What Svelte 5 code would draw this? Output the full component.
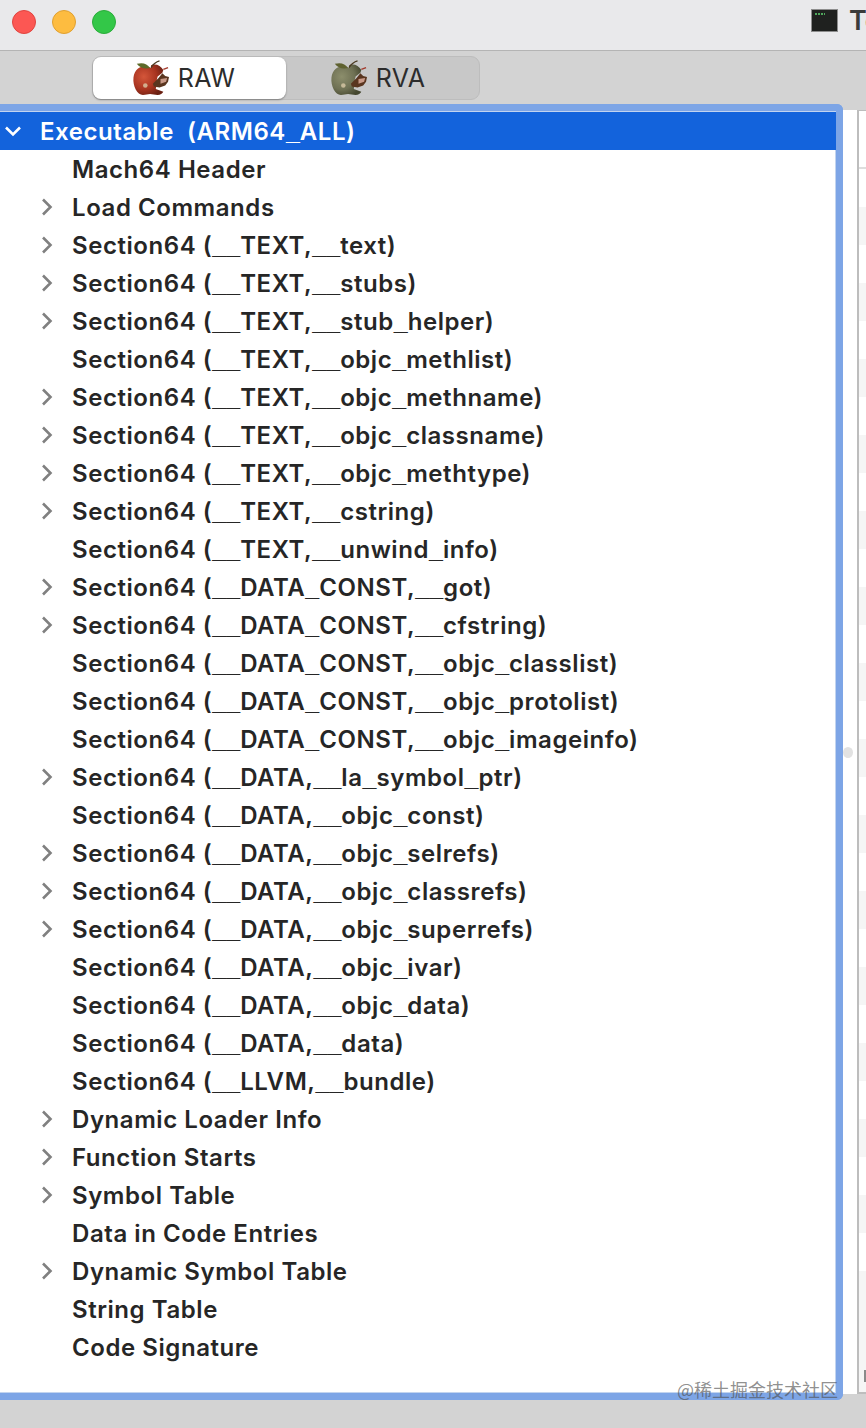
<script>
  const rows = [
    ['Mach64 Header', false],
    ['Load Commands', true],
    ['Section64 (__TEXT,__text)', true],
    ['Section64 (__TEXT,__stubs)', true],
    ['Section64 (__TEXT,__stub_helper)', true],
    ['Section64 (__TEXT,__objc_methlist)', false],
    ['Section64 (__TEXT,__objc_methname)', true],
    ['Section64 (__TEXT,__objc_classname)', true],
    ['Section64 (__TEXT,__objc_methtype)', true],
    ['Section64 (__TEXT,__cstring)', true],
    ['Section64 (__TEXT,__unwind_info)', false],
    ['Section64 (__DATA_CONST,__got)', true],
    ['Section64 (__DATA_CONST,__cfstring)', true],
    ['Section64 (__DATA_CONST,__objc_classlist)', false],
    ['Section64 (__DATA_CONST,__objc_protolist)', false],
    ['Section64 (__DATA_CONST,__objc_imageinfo)', false],
    ['Section64 (__DATA,__la_symbol_ptr)', true],
    ['Section64 (__DATA,__objc_const)', false],
    ['Section64 (__DATA,__objc_selrefs)', true],
    ['Section64 (__DATA,__objc_classrefs)', true],
    ['Section64 (__DATA,__objc_superrefs)', true],
    ['Section64 (__DATA,__objc_ivar)', false],
    ['Section64 (__DATA,__objc_data)', false],
    ['Section64 (__DATA,__data)', false],
    ['Section64 (__LLVM,__bundle)', false],
    ['Dynamic Loader Info', true],
    ['Function Starts', true],
    ['Symbol Table', true],
    ['Data in Code Entries', false],
    ['Dynamic Symbol Table', true],
    ['String Table', false],
    ['Code Signature', false]
  ];
  const stripes = Array.from({ length: 30 });
  const parts = (s) => s.split(/(_)/).filter(Boolean);
</script>

{#snippet apple(id, light, body, dark, leaf)}
  <svg class="apple" viewBox="0 0 40 38" aria-hidden="true">
    <defs>
      <radialGradient {id} cx="0.35" cy="0.4" r="0.7">
        <stop offset="0" stop-color={light} />
        <stop offset="0.6" stop-color={body} />
        <stop offset="1" stop-color={dark} />
      </radialGradient>
    </defs>
    <path d="M20 8.5C13 4.5 3 7 1.5 18.500c-1 9 4 18.500 10 18.500 3 0 5-1 7.500-1s5 1 8 1c3 0 5-1.500 6-3.500l-8-3 1-4 3-3-3-2 1-4 5-4 1-3c-3-5-8-7-13-5z" fill="url(#{id})" />
    <path d="M19 8.500C16 3.500 11 2.500 5 4c3 4 8 6 14 4.500z" fill={leaf} />
    <path d="M20 8c2-3 5-6 9-7" stroke="#4a3a22" stroke-width="1.4" fill="none" />
    <circle cx="14" cy="27" r="2.4" fill="#d9c9a8" opacity="0.8" />
    <path d="M22 25l6-6 4-5 3 3 4 1-1 5-3 4-6 2-6-1z" fill="#59351f" />
    <path d="M30 20l7-1-1 4-6 2z" fill="#c99a88" />
    <path d="M33 10l5-2" stroke="#a33a2c" stroke-width="1.4" />
  </svg>
{/snippet}

{#snippet chevron()}
  <svg class="chev" viewBox="0 0 12 20" aria-hidden="true">
    <path d="M2 2.500l7.500 7.500-7.500 7.500" fill="none" stroke="#808080" stroke-width="2.6" />
  </svg>
{/snippet}

{#snippet label(text)}
  <span>{#each parts(text) as p}{#if p === '_'}<span class="us">_</span>{:else}{p}{/if}{/each}</span>
{/snippet}

<div class="win">
  <header class="titlebar">
    <div class="lights">
      <span class="light red"></span>
      <span class="light yellow"></span>
      <span class="light green"></span>
    </div>
    <div class="doc">
      <span class="term"><span class="prompt"></span></span>
      <span class="title">Test</span>
    </div>
  </header>

  <div class="toolbar">
    <div class="segmented">
      <div class="seg on">
        {@render apple('ga', '#d4563a', '#a83420', '#6a2012', '#5d6a2a')}
        <span>RAW</span>
      </div>
      <div class="seg off">
        {@render apple('gb', '#8c8e6c', '#6f7154', '#45472f', '#5f6230')}
        <span>RVA</span>
      </div>
    </div>
  </div>

  <main class="content">
    <section class="tree">
      <div class="row selected">
        <svg class="chev-open" viewBox="0 0 18 12" aria-hidden="true">
          <path d="M2 2.500l7 7 7-7" fill="none" stroke="#fff" stroke-width="2.6" />
        </svg>
        <span>Executable</span>
        <span class="arch">{@render label('(ARM64_ALL)')}</span>
      </div>
      {#each rows as [text, expandable]}
        <div class="row">
          <span class="slot">
            {#if expandable}{@render chevron()}{/if}
          </span>
          {@render label(text)}
        </div>
      {/each}
    </section>

    <div class="gutter">
      <span class="handle"></span>
    </div>

    <section class="detail">
      <div class="head"></div>
      <div class="stripes">
        {#each stripes as _, i}
          <div class="stripe" class:alt={i % 2 === 1}></div>
        {/each}
      </div>
      <div class="foot"><span class="foot-glyph"></span></div>
    </section>
  </main>

  <footer class="bottom">
    <span class="mark">@稀土掘金技术社区</span>
  </footer>
</div>

<style>
  :global(body) {
    margin: 0;
    background: #d3d3d3;
  }
  .win {
    width: 866px;
    height: 1428px;
    display: flex;
    flex-direction: column;
    overflow: hidden;
    font-family: Inter, "Liberation Sans", Arial, sans-serif;
    color: #262626;
  }
  .titlebar {
    height: 50px;
    flex: none;
    background: #e9e9eb;
    border-bottom: 1px solid #b4b4b4;
    display: flex;
    align-items: center;
    justify-content: space-between;
    padding-left: 12px;
  }
  .lights {
    display: flex;
    gap: 16px;
    margin-top: -6px;
  }
  .light {
    width: 24px;
    height: 24px;
    border-radius: 50%;
    box-sizing: border-box;
  }
  .red { background: #fc5753; border: 1px solid #e0443f; }
  .yellow { background: #fdbc40; border: 1px solid #e0a030; }
  .green { background: #33c748; border: 1px solid #2aac3a; }
  .doc {
    display: flex;
    align-items: center;
    gap: 11px;
    width: 55px;
    overflow: hidden;
    flex: none;
    margin-top: -10px;
  }
  .term {
    width: 27px;
    height: 23px;
    flex: none;
    background: #1f211f;
    border: 1px solid #8d8d8d;
    box-sizing: border-box;
    position: relative;
  }
  .prompt {
    position: absolute;
    left: 3px;
    top: 3px;
    width: 10px;
    height: 2px;
    background: repeating-linear-gradient(90deg, #4fa85c 0 2px, #1f211f 2px 3px);
  }
  .title {
    font-size: 27px;
    font-weight: 600;
    color: #3a3a3a;
  }
  .toolbar {
    height: 53px;
    flex: none;
    background: #d3d3d3;
    padding: 5px 0 0 92px;
    box-sizing: border-box;
  }
  .segmented {
    width: 388px;
    height: 44px;
    box-sizing: border-box;
    background: #c8c8c8;
    border: 1px solid #bdbdbd;
    border-radius: 9px;
    display: flex;
  }
  .seg {
    width: 193px;
    display: flex;
    align-items: center;
    justify-content: center;
    gap: 8px;
    font-size: 25px;
    letter-spacing: 0.3px;
    color: #2c2c2c;
    border-radius: 8px;
    padding-right: 12px;
    box-sizing: border-box;
  }
  .seg.off {
    padding-right: 10px;
  }
  .seg.on {
    background: #fff;
    box-shadow: 0 1px 2px rgba(0, 0, 0, 0.35);
  }
  .apple {
    width: 38px;
    height: 36px;
  }
  .content {
    height: 1296px;
    flex: none;
    display: flex;
    position: relative;
  }
  .tree {
    width: 843px;
    height: 1296px;
    flex: none;
    box-sizing: border-box;
    background: #fff;
    border: solid #7da5e6;
    border-width: 7px 7px 7px 0;
    border-radius: 0 6px 6px 0;
    padding-top: 1px;
    box-shadow: inset 0 1px 0 #c2d4ef, inset -1px 0 0 #c2d4ef, inset 0 -1px 0 #c2d4ef;
  }
  .row {
    height: 38px;
    display: flex;
    align-items: center;
    font-size: 24px;
    font-weight: 600;
    letter-spacing: 0.56px;
    white-space: nowrap;
  }
  .us {
    font-family: "Liberation Sans", Arial, sans-serif;
    font-size: 25px;
    font-weight: 700;
    letter-spacing: 0;
  }
  .row.selected {
    background: #1363dc;
    color: #fff;
  }
  .arch {
    margin-left: 13px;
  }
  .chev-open {
    width: 18px;
    height: 12px;
    margin: 0 18px 0 4px;
    flex: none;
  }
  .slot {
    width: 72px;
    flex: none;
    display: flex;
    padding-left: 41px;
    box-sizing: border-box;
  }
  .chev {
    width: 12px;
    height: 20px;
  }
  .gutter {
    width: 14px;
    flex: none;
    margin: 6px 0;
    background: #fff;
    position: relative;
  }
  .handle {
    position: absolute;
    left: 0;
    top: 637px;
    width: 10px;
    height: 11px;
    background: #e2e2e2;
    border-radius: 50%;
  }
  .detail {
    flex: 1;
    margin: 6px 0;
    border-left: 2px solid #bdbdbd;
    border-top: 1px solid #bdbdbd;
    border-bottom: 2px solid #bdbdbd;
    background: #fff;
    overflow: hidden;
    display: flex;
    flex-direction: column;
  }
  .head {
    height: 56px;
    flex: none;
    border-bottom: 2px solid #dedede;
  }
  .stripes {
    flex: none;
  }
  .stripe {
    height: 38px;
    background: #fff;
  }
  .stripe.alt {
    background: #f5f5f5;
  }
  .foot {
    flex: 1;
    min-height: 0;
    position: relative;
    background: #f5f5f5;
  }
  .foot-glyph {
    position: absolute;
    right: 0;
    bottom: 10px;
    width: 2px;
    height: 12px;
    background: #8a8a8a;
  }
  .bottom {
    flex: 1;
    background: #d3d3d3;
    position: relative;
  }
  .mark {
    position: absolute;
    left: 677px;
    top: -23px;
    font-family: "Noto Sans CJK SC", sans-serif;
    font-size: 18px;
    line-height: 24px;
    white-space: nowrap;
    color: rgba(80, 80, 80, 0.65);
  }
</style>
